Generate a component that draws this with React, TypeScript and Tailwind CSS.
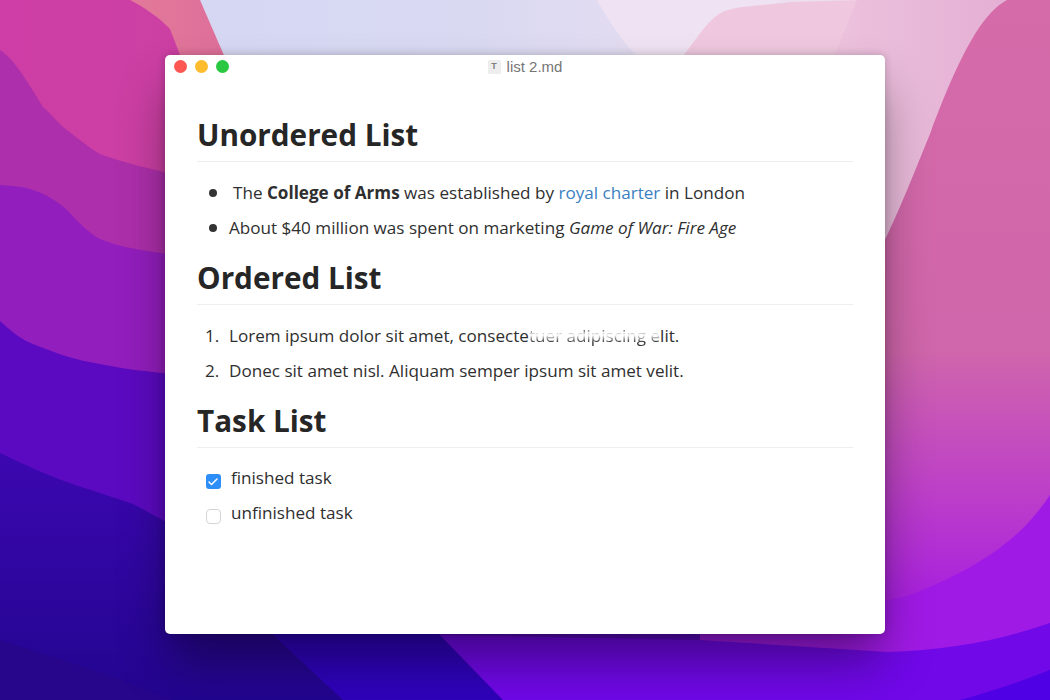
import { Check } from "lucide-react";

const openSans = "font-['Open_Sans',sans-serif]";

function Wallpaper() {
  return (
    <svg className="absolute inset-0" width="1050" height="700" viewBox="0 0 1050 700">
      <defs>
        <linearGradient id="top" x1="0" y1="0" x2="1" y2="0">
          <stop offset="0" stopColor="#d3d6f3" />
          <stop offset="0.45" stopColor="#d9d9f2" />
          <stop offset="0.75" stopColor="#ecdff0" />
          <stop offset="1" stopColor="#f0d8e8" />
        </linearGradient>
        <linearGradient id="coral" x1="0" y1="0" x2="1" y2="0">
          <stop offset="0" stopColor="#e58098" />
          <stop offset="1" stopColor="#de6f9a" />
        </linearGradient>
        <linearGradient id="rightPink" x1="0" y1="0" x2="0" y2="1">
          <stop offset="0" stopColor="#d56ba8" />
          <stop offset="0.5" stopColor="#d066ab" />
          <stop offset="0.7" stopColor="#bd40c8" />
          <stop offset="0.85" stopColor="#a922dd" />
          <stop offset="1" stopColor="#a01ae4" />
        </linearGradient>
        <linearGradient id="rightBack" x1="0" y1="0" x2="1" y2="0">
          <stop offset="0" stopColor="#edc4de" />
          <stop offset="1" stopColor="#e2aad2" />
        </linearGradient>
        <linearGradient id="p1" x1="0" y1="0" x2="1" y2="0">
          <stop offset="0" stopColor="#ce3ea6" />
          <stop offset="1" stopColor="#cb40a2" />
        </linearGradient>
        <linearGradient id="deep" gradientUnits="userSpaceOnUse" x1="0" y1="453" x2="0" y2="700">
          <stop offset="0" stopColor="#3c07b0" />
          <stop offset="1" stopColor="#22058f" />
        </linearGradient>
      </defs>

      <rect width="1050" height="700" fill="url(#top)" />
      <path d="M597 0 C 620 40 640 70 690 90 L 780 0 Z" fill="#efe2f2" />
      <path d="M683 56 C 700 35 710 15 728 10 C 745 5 770 5 790 2 L 860 0 L 900 120 L 680 120 Z" fill="#efc8df" />
      <path d="M857 0 L 834 56 L 820 260 L 1050 260 L 1050 0 Z" fill="url(#rightBack)" />
      <path d="M1007 0 C 985 12 963 45 930 134 C 915 170 900 210 880 250 L 700 320 L 700 700 L 1050 700 L 1050 0 Z" fill="url(#rightPink)" />
      <path d="M1050 495 C 1020 540 980 567 913 594 C 880 605 800 615 700 620 L 700 700 L 1050 700 Z" fill="#a01ae6" />

      {/* coral wedge top left */}
      <path d="M130 0 L 200 0 L 226 60 L 120 120 L 60 0 Z" fill="url(#coral)" />
      {/* left layers */}
      <path d="M0 0 L 130 0 C 145 8 160 18 170 29 L 182 60 L 240 200 L 0 200 Z" fill="url(#p1)" />
      <path d="M0 50 C 12 58 22 72 43 107 C 52 115 60 125 67 130 C 80 140 90 148 100 154 C 125 163 145 168 200 180 L 700 300 L 700 700 L 0 700 Z" fill="#ad2fab" />
      <path d="M0 185 C 15 186 25 187 33 190 C 48 195 58 202 67 210 C 80 224 90 234 100 239 C 125 249 145 251 200 258 L 700 340 L 700 700 L 0 700 Z" fill="#931ebe" />
      <path d="M0 321 C 12 332 22 340 33 344 C 55 353 75 360 100 364 C 125 369 145 372 200 376 L 700 460 L 700 700 L 0 700 Z" fill="#5c0ac2" />
      <path d="M0 453 C 25 465 45 474 67 482 C 90 490 110 496 133 504 C 145 510 155 516 170 524 L 400 700 L 0 700 Z" fill="url(#deep)" />
      <path d="M273 635 L 343 700 L 503 700 L 440 635 L 300 560 Z" fill="#2f03bb" />
      <path d="M440 635 L 503 700 L 1050 700 L 1050 623 C 1000 640 950 650 887 652 L 700 640 Z" fill="#7008e8" />
      <path d="M0 640 C 25 648 45 654 67 661 C 100 672 140 686 172 700 L 0 700 Z" fill="#27068c" />
      <path d="M960 700 C 990 692 1020 682 1050 670 L 1050 700 Z" fill="#4f00e4" />
    </svg>
  );
}

function TitleBar() {
  return (
    <div className="grid h-6 grid-cols-3 items-center">
      <div className="flex items-center gap-2 pb-[1px] pl-[8.5px]">
        <span className="h-[13px] w-[13px] rounded-full bg-[#fc5753]" />
        <span className="h-[13px] w-[13px] rounded-full bg-[#fdbc2e]" />
        <span className="h-[13px] w-[13px] rounded-full bg-[#2ac840]" />
      </div>
      <div className="flex items-center justify-center gap-[6px] font-['Liberation_Sans',sans-serif] text-[15px] text-[#757575]">
        <span className="flex h-[14px] w-[13px] items-center justify-center rounded-[1px] bg-[#eeeeee] text-[9px] font-bold text-[#808080]">
          T
        </span>
        list 2.md
      </div>
      <div />
    </div>
  );
}

function Heading({ children }: { children: React.ReactNode }) {
  return (
    <h2 className="border-b border-[#eeeeee] pb-[6px] text-[29.7px] leading-[40px] font-bold text-[#262626]">
      {children}
    </h2>
  );
}

function Item({ marker, children }: { marker: React.ReactNode; children: React.ReactNode }) {
  return (
    <li className="flex h-[35px] items-center">
      <span className="flex w-8 shrink-0 items-center">{marker}</span>
      <span>{children}</span>
    </li>
  );
}

const bullet = <span className="ml-3 h-2 w-2 rounded-full bg-[#333]" />;

export default function App() {
  return (
    <div className="relative h-[700px] w-[1050px] overflow-hidden pt-[55px] pl-[165px]">
      <Wallpaper />
      <div className={`relative h-[579px] w-[720px] rounded-[5px] bg-white shadow-[0_30px_50px_-4px_rgba(0,0,0,0.42),0_0_8px_rgba(0,0,0,0.2)] ${openSans}`}>
        <TitleBar />
        <div className="px-8 pt-9 text-[17.1px] text-[#2f2f2f]">
          <Heading>Unordered List</Heading>
          <ul className="mt-[13.5px] mb-[12.5px]">
            <Item marker={bullet}>
              <span className="pl-1">
                The <strong>College of Arms</strong> was established by{" "}
                <a className="text-[#3a7fc1]">royal charter</a> in London
              </span>
            </Item>
            <Item marker={bullet}>
              About $40 million was spent on marketing <em>Game of War: Fire Age</em>
            </Item>
          </ul>

          <Heading>Ordered List</Heading>
          <ol className="mt-[13.5px] mb-[12.5px]">
            <Item marker={<span className="pl-2">1.</span>}>
              Lorem ipsum dolor sit amet, consecte
              <span className="bg-[linear-gradient(180deg,#777_0%,#777_30%,#fff_48%,#999_62%,#333_80%)] bg-clip-text text-transparent">
                tuer adipiscing e
              </span>
              lit.
            </Item>
            <Item marker={<span className="pl-2">2.</span>}>
              Donec sit amet nisl. Aliquam semper ipsum sit amet velit.
            </Item>
          </ol>

          <Heading>Task List</Heading>
          <ul className="mt-[12.5px]">
            <li className="flex h-[35px] items-center">
              <span className="mt-[7px] ml-[8.5px] flex h-[15px] w-[15px] items-center justify-center rounded-[3px] bg-[#2e8ef7]">
                <Check className="h-3 w-3 text-white" strokeWidth={3} />
              </span>
              <span className="ml-[10.5px]">finished task</span>
            </li>
            <li className="flex h-[35px] items-center">
              <span className="mt-[7px] ml-[8.5px] h-[15px] w-[15px] rounded-[4px] border-[1.5px] border-[#d5d5d5] bg-white" />
              <span className="ml-[10.5px]">unfinished task</span>
            </li>
          </ul>
        </div>
      </div>
    </div>
  );
}
